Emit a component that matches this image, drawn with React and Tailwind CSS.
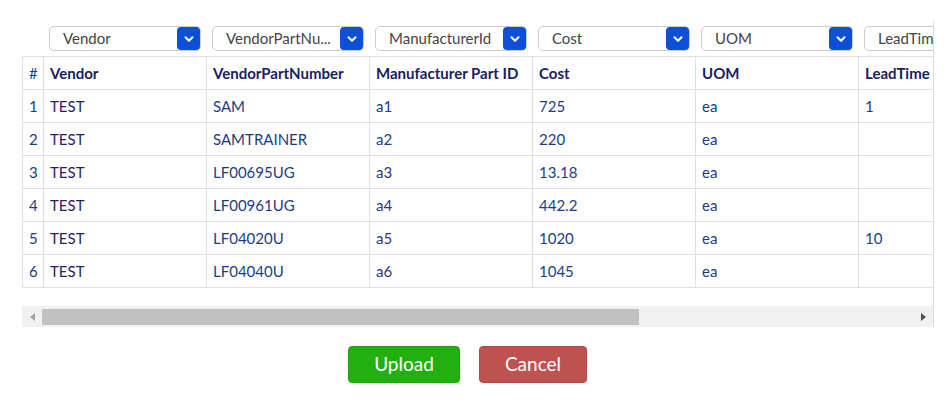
import React from "react";

const cols = ["Vendor", "VendorPartNumber", "Manufacturer Part ID", "Cost", "UOM", "LeadTime"];
const selects = ["Vendor", "VendorPartNu...", "ManufacturerId", "Cost", "UOM", "LeadTime"];
const rows = [
  ["1", "TEST", "SAM", "a1", "725", "ea", "1"],
  ["2", "TEST", "SAMTRAINER", "a2", "220", "ea", ""],
  ["3", "TEST", "LF00695UG", "a3", "13.18", "ea", ""],
  ["4", "TEST", "LF00961UG", "a4", "442.2", "ea", ""],
  ["5", "TEST", "LF04020U", "a5", "1020", "ea", "10"],
  ["6", "TEST", "LF04040U", "a6", "1045", "ea", ""],
];

function Select({ label, last }) {
  return (
    <div className="relative flex h-[25px] w-[152px] items-center rounded-[5px] border border-[#cbcbcb] bg-white pl-[13px] text-[15px] text-[#444]">
      <span className="whitespace-nowrap leading-none">{label}</span>
      {!last && (
        <div className="absolute right-0 top-0 flex h-[23px] w-[23px] items-center justify-center rounded-[4px] bg-[#0d4fd6]">
          <svg width="14" height="14" viewBox="0 0 24 24" fill="none" stroke="white" strokeWidth="3.5" strokeLinecap="round" strokeLinejoin="round">
            <polyline points="6,9 12,15 18,9" />
          </svg>
        </div>
      )}
    </div>
  );
}

export default function App() {
  return (
    <div className="w-[935px] bg-white font-['Lato',sans-serif]">
      <div className="ml-[22px] mt-[21px] w-[912px] overflow-hidden border-r border-[#dcdcdc] pt-[5px]">
        <div className="w-max">
          <div className="flex pl-[21px]">
            {selects.map((s, i) => (
              <div key={i} className="w-[163px] shrink-0 pl-[6px] pr-[5px]">
                <Select label={s} last={i === 5} />
              </div>
            ))}
          </div>
          <div className="mt-[5px] border-l border-t border-[#dfe0e6]">
            <div className="flex h-[33px] border-b border-[#dfe0e6] text-[15px] font-bold text-[#1a2060]">
              <div className="flex w-[21px] shrink-0 items-center border-r border-[#dfe0e6] pl-[6px] font-normal text-[#1e3a8a]">#</div>
              {cols.map((c, i) => (
                <div key={i} className="flex w-[163px] shrink-0 items-center border-r border-[#dfe0e6] pl-[6px] whitespace-nowrap">{c}</div>
              ))}
            </div>
            {rows.map((r, ri) => (
              <div key={ri} className="flex h-[33px] border-b border-[#dfe0e6] text-[15px] text-[#1c3b86]">
                <div className="flex w-[21px] shrink-0 items-center border-r border-[#dfe0e6] pl-[6px]">{r[0]}</div>
                {r.slice(1).map((v, i) => (
                  <div key={i} className={`flex w-[163px] shrink-0 items-center border-r border-[#dfe0e6] pl-[6px] whitespace-nowrap ${i === 0 ? "text-[#2a1c68]" : ""}`}>{v}</div>
                ))}
              </div>
            ))}
          </div>
        </div>
        <div className="mt-[18px] flex h-[21px] items-center bg-[#f1f1f1]">
          <div className="flex w-[20px] shrink-0 justify-center">
            <div className="h-0 w-0 border-y-[4px] border-r-[5px] border-y-transparent border-r-[#a3a3a3]" />
          </div>
          <div className="h-[16px] w-[597px] bg-[#c1c1c1]" />
          <div className="flex-1" />
          <div className="flex w-[20px] shrink-0 justify-center">
            <div className="h-0 w-0 border-y-[4px] border-l-[5px] border-y-transparent border-l-[#505050]" />
          </div>
        </div>
      </div>
      <div className="mt-[19px] flex justify-center gap-[19px] pb-[22px]">
        <button className="h-[37px] w-[112px] rounded-[4px] border border-[#1c9d0d] bg-[#22b010] text-[19px] text-white">Upload</button>
        <button className="h-[37px] w-[108px] rounded-[4px] border border-[#b04848] bg-[#bf5151] text-[19px] text-white">Cancel</button>
      </div>
    </div>
  );
}
